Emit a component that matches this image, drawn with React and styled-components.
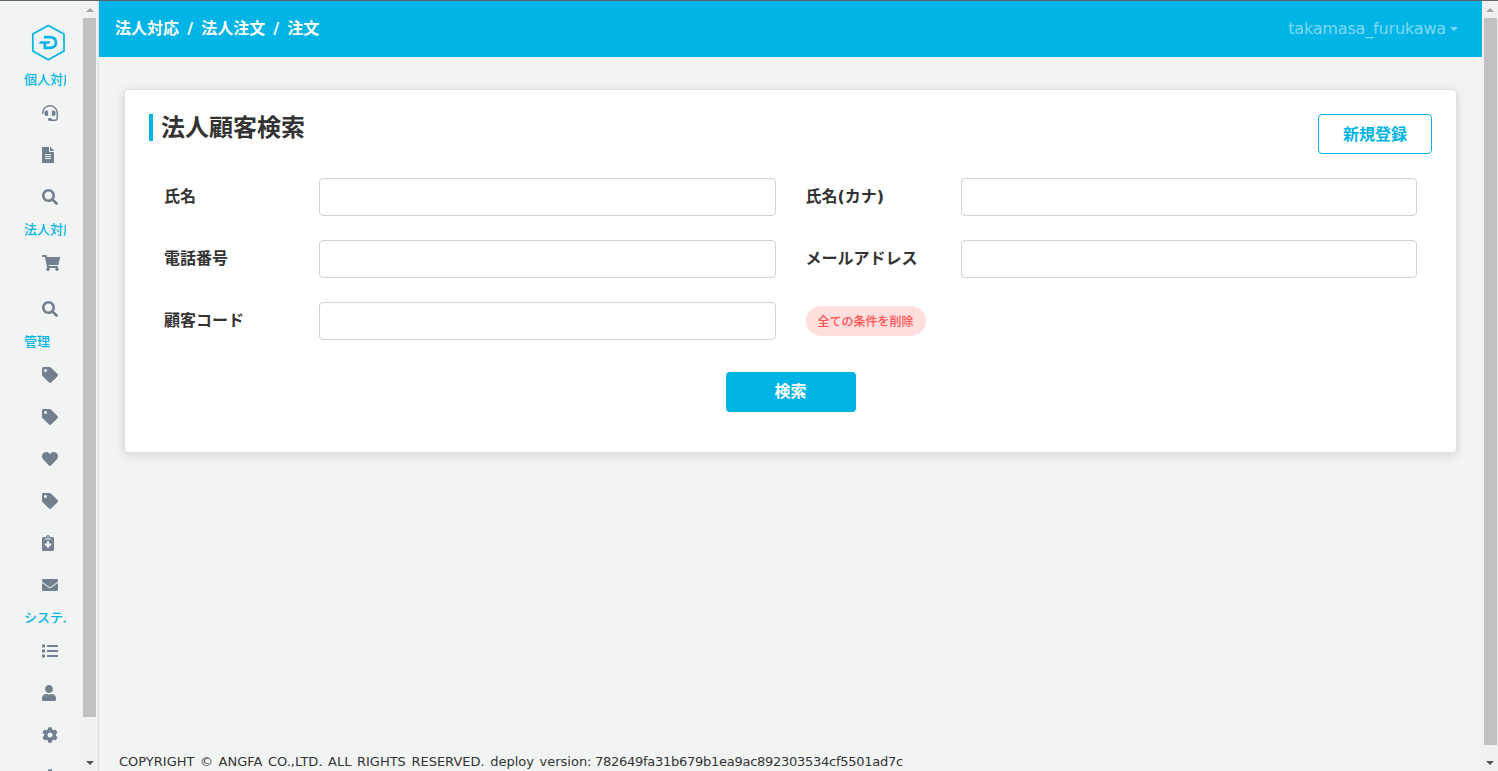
import React from 'react'
import styled, { createGlobalStyle } from 'styled-components'
import {
  FaHeadset,
  FaFileAlt,
  FaSearch,
  FaShoppingCart,
  FaTag,
  FaHeart,
  FaEnvelope,
  FaList,
  FaUser,
  FaCog,
} from 'react-icons/fa'

const ClipboardPlus = () => (
  <svg viewBox="0 0 384 512" width="12" height="16" fill="currentColor">
    <path
      fillRule="evenodd"
      d="M336 64h-80c0-35-29-64-64-64s-64 29-64 64H48C21 64 0 86 0 112v352c0 27 21 48 48 48h288c27 0 48-21 48-48V112c0-26-21-48-48-48zM192 40a24 24 0 1 1 0 48 24 24 0 0 1 0-48zM88 112h208v32H88zM156 200h72v68h68v72h-68v68h-72v-68H88v-72h68z"
    />
  </svg>
)

const menu = [
  {
    title: '個人対応',
    items: [{ icon: FaHeadset }, { icon: FaFileAlt, narrow: true }, { icon: FaSearch }],
  },
  {
    title: '法人対応',
    items: [{ icon: FaShoppingCart, wide: true }, { icon: FaSearch }],
  },
  {
    title: '管理',
    items: [
      { icon: FaTag },
      { icon: FaTag },
      { icon: FaHeart },
      { icon: FaTag },
      { icon: ClipboardPlus, narrow: true },
      { icon: FaEnvelope },
    ],
  },
  {
    title: 'システム',
    items: [{ icon: FaList }, { icon: FaUser, user: true }, { icon: FaCog }, { icon: FaCog }],
  },
]

const fields = ['氏名', '氏名(カナ)', '電話番号', 'メールアドレス', '顧客コード']

const ScrollBar = ({ thumb, wide }) => (
  <Track $wide={wide}>
    <Arrow $up />
    <Thumb $height={thumb} />
    <Arrow />
  </Track>
)

const Logo = () => (
  <svg width="34" height="38" viewBox="0 0 34 38" fill="none" stroke="#00b4e5">
    <path d="M17.3 2.4 33 10.9V28.1L17.3 36.8 1.8 28.1V10.9Z" strokeWidth="1.7" />
    <path d="M12.8 14.2H18.6C22.8 14.2 25 16.3 25 19.5S22.8 24.8 18.6 24.8H13.9V20" strokeWidth="2.7" />
    <path d="M9.6 18.2H19.4L18.2 20.8H7.7Z" fill="#00b4e5" stroke="none" />
  </svg>
)

const App = () => {
  return (
    <Page>
      <GlobalStyle />
      <Sidebar>
        <Menu>
          <LogoBox>
            <Logo />
          </LogoBox>
          {menu.map((group) => (
            <div key={group.title}>
              <MenuTitle>{group.title}</MenuTitle>
              {group.items.map(({ icon: Icon, wide, narrow, user }, index) => (
                <MenuItem key={index} $wide={wide} $narrow={narrow} $user={user}>
                  <Icon />
                </MenuItem>
              ))}
            </div>
          ))}
        </Menu>
        <ScrollBar thumb={699} />
      </Sidebar>
      <Main>
        <Header>
          <Breadcrumb>法人対応 / 法人注文 / 注文</Breadcrumb>
          <UserMenu>
            takamasa_furukawa
            <Caret />
          </UserMenu>
        </Header>
        <Content>
          <Card>
            <CardHead>
              <Title>法人顧客検索</Title>
              <OutlineButton>新規登録</OutlineButton>
            </CardHead>
            <Form>
              {fields.map((label) => (
                <Field key={label}>
                  <Label>{label}</Label>
                  <Input />
                </Field>
              ))}
              <ClearButton>全ての条件を削除</ClearButton>
            </Form>
            <SearchButton>検索</SearchButton>
          </Card>
        </Content>
        <Footer>
          COPYRIGHT © ANGFA CO.,LTD. ALL RIGHTS RESERVED. deploy version:{' '}
          <Version>782649fa31b679b1ea9ac892303534cf5501ad7c</Version>
        </Footer>
      </Main>
      <ScrollBar thumb={727} wide />
    </Page>
  )
}

const GlobalStyle = createGlobalStyle`
  * {
    box-sizing: border-box;
  }
  body {
    margin: 0;
    overflow: hidden;
    background-color: #f1f4f3;
    color: #333;
    font-family: "DejaVu Sans", "Noto Sans CJK JP", sans-serif;
  }
  button, input {
    font-family: inherit;
  }
`

const Page = styled.div`
  display: flex;
  height: 771px;
  border-top: 1px solid #5f6368;
`

const Sidebar = styled.aside`
  display: flex;
  flex: none;
  width: 99px;
  border-right: 1px solid #dcdee6;
  overflow: hidden;
`

const Menu = styled.nav`
  width: 81px;
  height: 770px;
  overflow: hidden;
  padding-left: 24px;
`

const LogoBox = styled.div`
  height: 67px;
  padding: 22px 0 0 7px;
`

const MenuTitle = styled.div`
  width: 42px;
  height: 24px;
  line-height: 21px;
  overflow: hidden;
  white-space: nowrap;
  font-size: 13px;
  font-weight: 500;
  font-family: "Noto Sans CJK JP", sans-serif;
  color: #00b4e5;
`

const MenuItem = styled.div`
  display: flex;
  align-items: center;
  height: 42px;
  padding-left: 18px;
  margin-bottom: ${({ $wide }) => ($wide ? 4 : 0)}px;
  color: #727f8f;
  svg {
    flex: none;
    width: ${({ $wide, $narrow, $user }) => ($wide ? 18 : $narrow ? 12 : $user ? 14 : 16)}px;
    height: 16px;
  }
`

const Track = styled.div`
  display: flex;
  flex: none;
  flex-direction: column;
  align-items: center;
  width: ${({ $wide }) => ($wide ? 16 : 17)}px;
  height: 770px;
  background-color: #f1f1f1;
`

const Arrow = styled.span`
  flex: none;
  width: 0;
  margin: ${({ $up }) => ($up ? '7px 0 6px' : 'auto 0 6px')};
  border: 4px solid transparent;
  border-top: ${({ $up }) => ($up ? '0' : '4px solid #505050')};
  border-bottom: ${({ $up }) => ($up ? '4px solid #a3a3a3' : '0')};
`

const Thumb = styled.div`
  width: 13px;
  height: ${({ $height }) => $height}px;
  background-color: #c1c1c1;
`

const Main = styled.main`
  display: flex;
  flex: 1;
  flex-direction: column;
  min-width: 0;
`

const Header = styled.header`
  display: flex;
  justify-content: space-between;
  flex: none;
  height: 56px;
  padding: 0 24px 0 16px;
  line-height: 54px;
  font-size: 16px;
  background-color: #00b4e5;
`

const Breadcrumb = styled.div`
  padding-top: 1px;
  font-weight: 700;
  word-spacing: 2.6px;
  color: #fff;
`

const UserMenu = styled.div`
  display: flex;
  align-items: center;
  letter-spacing: -0.16px;
  color: rgba(255, 255, 255, 0.5);
`

const Caret = styled.span`
  margin-left: 4px;
  border: 4px solid transparent;
  border-top-color: currentColor;
  border-bottom: 0;
`

const Content = styled.div`
  flex: 1;
  padding: 32px 25px 0;
`

const Card = styled.section`
  display: flex;
  flex-direction: column;
  height: 364px;
  padding: 24px;
  border: 1px solid #dfe0e0;
  border-radius: 4px;
  background-color: #fff;
  box-shadow: 0 2px 10px rgba(0, 0, 0, 0.14);
`

const CardHead = styled.div`
  display: flex;
  justify-content: space-between;
  align-items: flex-start;
`

const Title = styled.h1`
  margin: 0;
  height: 27px;
  padding-left: 8px;
  border-left: 4px solid #00b4e5;
  line-height: 28px;
  font-size: 24px;
  font-weight: 700;
`

const OutlineButton = styled.button`
  width: 114px;
  height: 40px;
  padding: 0 0 3px;
  border: 1px solid #00b4e5;
  border-radius: 4px;
  background-color: #fff;
  color: #00b4e5;
  font-size: 16px;
  font-weight: 700;
`

const Form = styled.div`
  display: grid;
  grid-template-columns: 1fr 1fr;
  gap: 24px 30px;
  padding: 24px 15px 0;
`

const Field = styled.label`
  display: flex;
`

const Label = styled.span`
  flex: none;
  width: 155px;
  line-height: 37px;
  font-size: 16px;
  font-weight: 700;
`

const Input = styled.input`
  flex: 1;
  min-width: 0;
  height: 38px;
  border: 1px solid #ced2d9;
  border-radius: 4px;
  background-color: #fff;
`

const ClearButton = styled.button`
  width: 120px;
  height: 30px;
  margin-top: 4px;
  padding: 0 0 2px;
  border: 0;
  border-radius: 15px;
  background-color: #ffdede;
  color: #ff5050;
  font-size: 12px;
  font-weight: 500;
`

const SearchButton = styled.button`
  align-self: center;
  width: 130px;
  height: 40px;
  margin-top: 32px;
  padding: 0 0 4px;
  border: 0;
  border-radius: 4px;
  background-color: #00b4e5;
  color: #fff;
  font-size: 16px;
  font-weight: 700;
`

const Footer = styled.footer`
  flex: none;
  height: 19px;
  padding-left: 20px;
  line-height: 19px;
  font-size: 13px;
  word-spacing: 1.4px;
  white-space: nowrap;
`

const Version = styled.span`
  margin-left: -2px;
  letter-spacing: -0.27px;
`

export default App
